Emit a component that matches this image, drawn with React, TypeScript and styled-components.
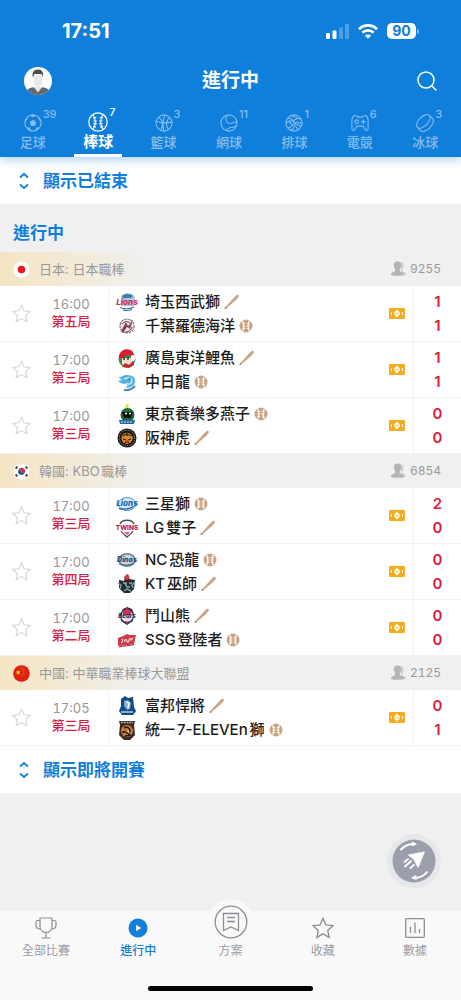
import React, { useState } from "react";
import styled, { createGlobalStyle } from "styled-components";

const blue = "#107fdb";
const red = "#d9213b";
const tan = "#c9a583";
const sans = `Inter, "Noto Sans CJK TC", "Liberation Sans", sans-serif`;

const GlobalStyle = createGlobalStyle`
  * { box-sizing: border-box; }
  body { margin: 0; background: #f0f0f0; font-family: ${sans}; text-autospace: normal; }
  button { font: inherit; color: inherit; background: none; border: 0; padding: 0; margin: 0; cursor: pointer; }
  svg { display: block; flex: none; overflow: visible; }
  h1, h2, h3, ul { margin: 0; padding: 0; font: inherit; }
  ul { list-style: none; }
`;

const Page = styled.div`
  display: flex;
  flex-direction: column;
  min-height: 100vh;
  background: #f0f0f0;
`;

const Header = styled.header`
  position: relative;
  z-index: 1;
  background: ${blue};
  color: #fff;
  box-shadow: 0 2px 10px rgba(16, 127, 219, 0.4);
`;

const StatusBar = styled.div`
  display: flex;
  align-items: center;
  justify-content: space-between;
  height: 62px;
  padding: 0 42px 0 62px;
`;

const Clock = styled.time`
  font-size: 20px;
  line-height: 24px;
  font-weight: 700;
`;

const StatusIcons = styled.div`
  display: flex;
  align-items: center;
  gap: 9px;
`;

const Battery = styled.div`
  display: flex;
  align-items: center;
  gap: 1px;
`;

const BatteryLevel = styled.span`
  width: 29px;
  border-radius: 5px;
  background: #fff;
  color: ${blue};
  font-size: 14px;
  line-height: 16px;
  font-weight: 700;
  text-align: center;
`;

const BatteryCap = styled.span`
  width: 2px;
  height: 5px;
  border-radius: 0 2px 2px 0;
  background: #7fbaf0;
`;

const TitleBar = styled.div`
  display: grid;
  grid-template-columns: 1fr auto 1fr;
  align-items: center;
  height: 38px;
  padding: 0 24px;
`;

const Title = styled.h1`
  font-size: 19px;
  line-height: 28px;
  font-weight: 700;
`;

const IconButton = styled.button<{ $end?: boolean }>`
  display: flex;
  align-items: center;
  justify-content: center;
  justify-self: ${(p) => (p.$end ? "end" : "start")};
`;

const Tabs = styled.nav`
  display: flex;
  height: 57px;
  padding-right: 3px;
`;

const Tab = styled.button<{ $active: boolean }>`
  position: relative;
  flex: 1;
  display: flex;
  flex-direction: column;
  align-items: center;
  justify-content: flex-end;
  gap: 3px;
  padding-bottom: 8px;
  color: ${(p) => (p.$active ? "#fff" : "#85bdef")};
  font-size: ${(p) => (p.$active ? 15 : 13)}px;
  font-weight: ${(p) => (p.$active ? 700 : 500)};
  line-height: 14px;

  &::after {
    content: "";
    position: absolute;
    bottom: 0;
    width: 48px;
    height: 3px;
    background: ${(p) => (p.$active ? "#fff" : "transparent")};
  }
`;

const TabIcon = styled.span`
  position: relative;
  display: block;
`;

const TabCount = styled.sup`
  position: absolute;
  left: 100%;
  top: -7px;
  padding-left: 1px;
  font-size: 11px;
  line-height: 14px;
  font-weight: 500;
`;

const Toggle = styled.button`
  display: flex;
  align-items: center;
  gap: 15px;
  width: 100%;
  height: 47px;
  padding: 0 20px;
  background: #fff;
  color: ${blue};
  font-size: 17px;
  line-height: 24px;
  font-weight: 700;
`;

const SectionTitle = styled.h2`
  padding: 16px 13px 6px;
  color: ${blue};
  font-size: 17px;
  line-height: 26px;
  font-weight: 700;
`;

const LeagueHeader = styled.div`
  display: flex;
  align-items: center;
  height: 34px;
  padding: 0 20px 0 13px;
  background: linear-gradient(90deg, #f5e5c3 0, #f0f0f0 150px);
  color: #999;
  font-size: 13px;
  line-height: 18px;
`;

const LeagueName = styled.h3`
  flex: 1;
  padding-left: 9px;
`;

const Viewers = styled.span`
  display: flex;
  align-items: center;
  gap: 4px;
  font-size: 12px;
  font-variant-numeric: tabular-nums;
`;

const MatchRow = styled.li`
  display: grid;
  grid-template-columns: 42px 67px 1fr 32px 48px;
  height: 56px;
  background: #fff;
  border-bottom: 1px solid #f2f2f2;
`;

const Center = styled.div`
  display: flex;
  align-items: center;
  justify-content: center;
`;

const StarButton = styled.button`
  display: flex;
  align-items: center;
  justify-content: center;
  color: #d6d6d6;
`;

const Schedule = styled.div`
  padding: 10px 9px 0 1px;
  border-right: 1px solid #f3f3f3;
  font-size: 13px;
  line-height: 17px;
  text-align: center;
`;

const Kickoff = styled.time`
  display: block;
  color: #979797;
  font-variant-numeric: tabular-nums;
`;

const Inning = styled.span`
  display: block;
  color: ${red};
  font-weight: 500;
`;

const Teams = styled.div`
  padding: 4px 0 0 8px;
`;

const Team = styled.div`
  display: flex;
  align-items: center;
  height: 24px;
  color: #1c1c1c;
  font-size: 15px;
  line-height: 24px;
  font-weight: 500;
`;

const TeamName = styled.span`
  padding: 0 4px 0 8px;
  white-space: nowrap;
`;

const Scores = styled.div`
  padding-top: 4px;
  border-left: 1px solid #f3f3f3;
  color: ${red};
  font-size: 15px;
  line-height: 24px;
  font-weight: 600;
  text-align: center;
`;

const Score = styled.div``;

const Footer = styled.footer`
  position: sticky;
  bottom: 0;
  margin-top: auto;
  height: 89px;
  background: #f9f9f9;
`;

const BottomNav = styled.nav`
  display: flex;
`;

const NavItem = styled.button<{ $active?: boolean }>`
  position: relative;
  flex: 1;
  display: flex;
  flex-direction: column;
  align-items: center;
  justify-content: flex-end;
  gap: 4px;
  height: 48px;
  color: ${(p) => (p.$active ? blue : "#9a9ba3")};
  font-size: 12px;
  line-height: 16px;
  font-weight: ${(p) => (p.$active ? 500 : 400)};
`;

const RaisedIcon = styled.span`
  position: absolute;
  bottom: 14px;
  display: flex;
  align-items: center;
  justify-content: center;
  width: 46px;
  height: 46px;
  border-radius: 50%;
  background: #f9f9f9;
`;

const FloatingButton = styled.button`
  position: absolute;
  right: 20px;
  bottom: calc(100% + 23px);
  display: flex;
  align-items: center;
  justify-content: center;
  width: 54px;
  height: 54px;
  border-radius: 50%;
  background: #e6e7ea;
`;

const HomeIndicator = styled.div`
  width: 165px;
  height: 5px;
  margin: 27px auto 0;
  border-radius: 3px;
  background: #000;
`;

const Signal = () => (
  <svg width="23" height="15" viewBox="0 0 23 15" fill="#fff">
    <rect x="0" y="9" width="4" height="6" rx="1" />
    <rect x="6.500" y="6.500" width="4" height="8.500" rx="1" />
    <rect x="13" y="3.500" width="4" height="11.500" rx="1" opacity=".25" />
    <rect x="19" y="0" width="4" height="15" rx="1" opacity=".25" />
  </svg>
);

const Wifi = () => (
  <svg width="20" height="15" viewBox="0 0 20 15" fill="none" stroke="#fff" strokeWidth="2.700">
    <path d="M1 5.200C6 .2 14 .2 19 5.200" />
    <path d="M4.400 8.700c3.200-3 8-3 11.200 0" />
    <path d="M10 14.800 6.900 11.600c1.800-1.500 4.400-1.500 6.200 0z" fill="#fff" stroke="none" />
  </svg>
);

const Avatar = () => (
  <svg width="28" height="28" viewBox="0 0 29 29">
    <defs>
      <clipPath id="avatar">
        <circle cx="14.500" cy="14.500" r="14.500" />
      </clipPath>
    </defs>
    <g clipPath="url(#avatar)">
      <rect width="29" height="29" fill="#fff" />
      <path d="M2 29c0-6 3-7 8-8l4.500 2 4.500-2c5 1 8 2 8 8z" fill="#66696e" />
      <path d="m10 20.500 4.500 6 4.500-6z" fill="#e5e7e9" />
      <path d="M9.800 8h9.400v6c0 4-2 6.500-4.700 6.500S9.800 18 9.800 14z" fill="#ebe9e8" />
      <path d="M9.300 11C8 6 9.500 3 14 2.500c4-.3 6.500 2 5.700 8.500l-1.200-3.500c-3 0-5-.2-8-.1z" fill="#4e4e50" />
    </g>
  </svg>
);

const SearchIcon = () => (
  <svg width="20" height="20" viewBox="0 0 20 20" fill="none" stroke="#fff" strokeWidth="1.500" strokeLinecap="round">
    <circle cx="9" cy="9" r="8" />
    <path d="m15 15 4 4" />
  </svg>
);

const sportArt: Record<string, React.ReactNode> = {
  soccer: (
    <>
      <circle cx="10" cy="10" r="9" />
      <g fill="currentColor" stroke="none">
        <path d="m10 6.300 3.600 2.700-1.400 4.200H7.800L6.400 9z" />
        <path d="M6.500 2 10 3.500 13.500 2 10 1zM1.300 8.500 3.700 6 4 2.800C2 4.500 1.300 6 1.300 8.500zM18.700 8.500 16.300 6 16 2.800c2 1.700 2.700 3.200 2.700 5.700zM2.800 14.700l3.600.2 1.400 3.500c-2.500-.6-4-1.800-5-3.700zM17.200 14.700l-3.600.2-1.400 3.500c2.500-.6 4-1.800 5-3.700z" />
      </g>
    </>
  ),
  baseball: (
    <>
      <circle cx="10" cy="10" r="9.200" />
      <path d="M5 2.500c3 4.500 3 10.500 0 15M15 2.500c-3 4.500-3 10.500 0 15" />
      <path d="m5 6.200 3.200-1M5.500 9h3.300M5.500 11.500l3.300.3M5 14l3 1.200M15 6.200l-3.200-1M14.500 9h-3.300M14.500 11.500l-3.300.3M15 14l-3 1.200" />
    </>
  ),
  basketball: (
    <>
      <circle cx="10" cy="10" r="9" />
      <path d="M1.500 8c5 2 11 2.500 17.300 1M11 1c-2 5-2.500 12-1 18M4.200 3.500c4.300 3.500 5.300 9 2.300 14.500M16.500 4c-4.500 3-5 9-1.500 13.500" />
    </>
  ),
  tennis: (
    <>
      <circle cx="10" cy="10" r="9" />
      <path d="M8 1.200C5 6 7 11 11.500 10.500c3-.5 5-2 7.400-1.500M7 18.500c1-3 4-3.500 6.500-3.500 2 0 3.500-1 4.500-2" />
    </>
  ),
  volleyball: (
    <>
      <circle cx="10" cy="10" r="9" />
      <path d="M10 10C9 6 6 4 2.500 5M9.500 8C11 5 15 4 18 6M10 10c4-1.500 7-.5 9 1.500M10 10c1 4-1 7-4 8M6.500 2C10 2.500 13 4 14 5.300M11 11c3 0 6 2 6.500 3.500M1 10c3-2 5-2 7.500-2.500M8.500 12C6 11 5 9 4.500 7M3 15.500c3-.5 5-2 5.500-4M11 13c2 1 3 3 2.500 5" />
    </>
  ),
  gamepad: (
    <>
      <path d="M3.500 2C5 1.300 6.500 2 7.500 3.500h5C13.500 2 15 1.300 16.500 2 18.500 3 19 4 19 7v9c0 2.500-2.500 2.700-3.500.7L13.500 13.500h-7l-2 3.200C3.500 18.700 1 18.500 1 16V7c0-3 .5-4 2.500-5z" />
      <circle cx="6.300" cy="8.500" r="2" />
      <path d="M13.700 6v5M11.200 8.500h5" />
    </>
  ),
  puck: (
    <g transform="rotate(-45 10 10)">
      <ellipse cx="10" cy="7.500" rx="9.500" ry="5" />
      <path d="M.5 7.500v5c0 2.600 4 5 9.500 5s9.500-2.400 9.500-5v-5" />
    </g>
  ),
};

const sports = [
  { key: "soccer", label: "足球", count: 39 },
  { key: "baseball", label: "棒球", count: 7 },
  { key: "basketball", label: "籃球", count: 3 },
  { key: "tennis", label: "網球", count: 11 },
  { key: "volleyball", label: "排球", count: 1 },
  { key: "gamepad", label: "電競", count: 6 },
  { key: "puck", label: "冰球", count: 3 },
];

const ExpandIcon = () => (
  <svg width="8" height="16" viewBox="0 0 8 16" fill="none" stroke={blue} strokeWidth="1.800">
    <path d="m0 4.500 4-3.500 4 3.500M0 11.500 4 15l4-3.500" />
  </svg>
);

const flagArt: Record<string, React.ReactNode> = {
  jp: (
    <>
      <circle cx="9" cy="9" r="8.500" fill="#fff" />
      <circle cx="9" cy="9" r="4" fill="#ee1622" />
    </>
  ),
  kr: (
    <>
      <circle cx="9" cy="9" r="8.500" fill="#fff" />
      <path d="M5.500 8a3.700 3.700 0 0 1 7.200 1.800C11 11.500 9.700 10 9 9S6.500 7 5.500 8z" fill="#d5304a" />
      <path d="M5.500 8a3.700 3.700 0 0 0 7.200 1.800C11 11.500 9.700 10 9 9S6.500 7 5.500 8z" fill="#1c56a5" />
      <path d="m2.800 6 1.800-2.300M13.400 3.700 15.200 6M2.800 12l1.800 2.300M13.400 14.300l1.800-2.300" stroke="#444" strokeWidth="2" />
    </>
  ),
  cn: (
    <>
      <circle cx="9" cy="9" r="8.800" fill="#df2112" />
      <path d="m5.500 5 .8 1.900 2 .1-1.600 1.300.6 2-1.800-1.100-1.800 1.100.6-2L2.700 7l2-.1z" fill="#fcd20e" />
      <path d="M9 3.500h1.200v1H9zM11 5.500h1v1h-1zM11 8.500h1v1h-1zM9 10.500h1.200v1H9z" fill="#f8b414" />
    </>
  ),
};

const ViewersIcon = () => (
  <svg width="15" height="16" viewBox="0 0 15 16">
    <path d="M9 1.500c3-.5 4 1.500 3.600 4-.2 2-1.500 3-1.300 4 .3 1.500 3.700 1 3.700 4.500h-4z" fill="#cfcfcf" />
    <path d="M6.500.5c3 0 4 2 3.600 4.700-.3 2-1.600 2.900-1.400 4.200.3 1.600 4.300 1.300 4.300 4.600 0 1-13 1-13 0 0-3.300 4-3 4.300-4.600.2-1.300-1.100-2.200-1.400-4.200C2.500 2.500 3.500.5 6.500.5z" fill="#b5b5b5" />
  </svg>
);

const StarShape = ({ size, width }: { size: number; width: number }) => (
  <svg width={size} height={size} viewBox="0 0 20 20" fill="none" stroke="currentColor" strokeWidth={width}>
    <path d="m10 1.300 2.700 5.900 6.300.7-4.700 4.300 1.300 6.300-5.600-3.200-5.600 3.200 1.300-6.300L1 7.900l6.300-.7z" />
  </svg>
);

const Bat = () => (
  <svg width="16" height="16" viewBox="0 0 16 16">
    <path d="M1 13.600 9.600 4l3-2.900c1.300-1 3 .5 2 1.900l-2.800 3.200L2 14.500z" fill={tan} />
    <circle cx="1.500" cy="14" r="1.100" fill="#b08a68" />
  </svg>
);

const Ball = () => (
  <svg width="14" height="14" viewBox="0 0 14 14" fill="none">
    <circle cx="7" cy="7" r="6.500" fill={tan} />
    <path d="M3.600 1.500c1.600 3.500 1.600 7.500 0 11M10.400 1.500c-1.600 3.500-1.600 7.500 0 11" stroke="#fff" strokeWidth="1.100" />
    <path d="M3.200 4.500h3M3.500 7h3M3.200 9.500h3M10.800 4.500h-3M10.500 7h-3M10.800 9.500h-3" stroke="#fff" strokeWidth=".8" />
  </svg>
);

const PitchIcon = () => (
  <svg width="16" height="11" viewBox="0 0 16 11" fill="none" stroke="#fff">
    <rect width="16" height="11" rx="1" fill="#f3ad1c" stroke="none" />
    <circle cx="8" cy="5.500" r="2.200" strokeWidth="1.200" />
    <path d="M8 1.500v8" strokeWidth="1.200" />
    <path d="M2.500 4v3M13.500 4v3" strokeWidth="1" />
  </svg>
);

const mark = (text: string, fill: string, size = 7, y = 12) => (
  <text x="10" y={y} textAnchor="middle" fontSize={size} fontWeight="800" fontStyle="italic" fill={fill} fontFamily="Inter, sans-serif">
    {text}
  </text>
);

const logoArt: Record<string, React.ReactNode> = {
  seibu: (
    <>
      <path d="M4 5c1-4 11-5 14 0l-1 9H4z" fill="#a9c9de" />
      <path d="M5 4c3-3 8-3 11 0l-2 2H6z" fill="#3d7fae" />
      {mark("Lions", "#d42a5b", 8, 13)}
      <path d="M3 15.500c4 1.500 10 1.500 14-.5M6 18c3 .8 6 .6 9-.5" stroke="#3572a8" strokeWidth="1.100" fill="none" />
    </>
  ),
  lotte: (
    <>
      <circle cx="10" cy="10" r="7" fill="#f1e9eb" stroke="#8a7079" strokeWidth="1.200" strokeDasharray="2.500 .8" />
      <path d="m4 15 5-9 2 4 5-6-3 9-3-2-4 6z" fill="#8c4458" />
      <path d="M5 8c3-3 6-3 8-1M8 16c4 0 6-2 7-5" stroke="#444" strokeWidth="1" fill="none" />
    </>
  ),
  carp: (
    <>
      <circle cx="10" cy="11" r="8.500" fill="#2f8f50" />
      <path d="M5 10h10v6l-5 3-5-3z" fill="#f4dcc8" />
      <path d="M2 8C3 1 12-1 16 4l1 4-6-1-8 4z" fill="#d8202f" />
      <path d="M14 8c4-3 6 2 3 5l-3 1z" fill="#fff" />
      <path d="m5 19 3-4 4 2 4-4 1 4-5 3z" fill="#c72232" />
      <path d="M7 9v3M11 9v3" stroke="#222" strokeWidth="1.300" />
    </>
  ),
  dragons: (
    <>
      <path d="M1 5c4 1 4-2 9-2 6 0 9 3 8 7s-5 6-10 6c3-1 3-3 1-4-4 0-6-1-8-3l4-1z" fill="#55b3dd" />
      <path d="M7 7c4-2 8-1 8 2s-4 4-6 2" fill="none" stroke="#dff3fb" strokeWidth="1.200" />
      <path d="M7 18c5 1 8-1 11-4" stroke="#3b7fbe" strokeWidth="1.800" fill="none" />
      <circle cx="12.500" cy="7" r="1" fill="#1c5896" />
    </>
  ),
  swallows: (
    <>
      <path d="m8 5 1-5 3 1-1 4z" fill="#e3dc35" />
      <circle cx="10.500" cy="11" r="7" fill="#176b3c" />
      <path d="M5 8h11l-2 6H7z" fill="#111" />
      <path d="M8 9.500h2M12 9.500h2" stroke="#fff" strokeWidth="1.500" />
      <path d="M2 16h16l-1 4H3z" fill="#2966a6" />
      <path d="M4 18h12" stroke="#dcecf5" strokeWidth="1" strokeDasharray="2 1" />
    </>
  ),
  tigers: (
    <>
      <circle cx="10" cy="10" r="9.500" fill="#171717" />
      <circle cx="10" cy="10" r="7.800" fill="none" stroke="#b7a68b" strokeWidth=".9" strokeDasharray="1.200 1" />
      <circle cx="10" cy="10.300" r="5.600" fill="#dc8a2a" />
      <path d="M6 8c2-2 6-2 8 0M6 11l3 1M14 11l-3 1M8 15l2-2 2 2M10 5v3" stroke="#231912" strokeWidth="1.200" fill="none" />
      <path d="M8.500 13h3v2h-3z" fill="#c82b25" />
    </>
  ),
  samsung: (
    <>
      <ellipse cx="10" cy="10" rx="8.500" ry="6.500" fill="#d9eaf6" stroke="#4c95ce" strokeWidth="1" />
      {mark("Lions", "#1967ae", 8, 12)}
      <path d="M2 14.500c5 1 11 .5 15-2" stroke="#1967ae" strokeWidth="1.300" fill="none" />
    </>
  ),
  twins: (
    <>
      <path d="M3 6C5 1 15 1 17 6M4 13c2 3 4 4 6 6 2-2 4-3 6-6" stroke="#55494e" strokeWidth="1.300" fill="none" />
      <text x="10" y="12" textAnchor="middle" fontSize="6.500" fontWeight="800" fill="#c2184f" fontFamily="Inter, sans-serif">TWINS</text>
      <path d="M7 14h6l-3 3z" fill="#cf597f" />
    </>
  ),
  nc: (
    <>
      <ellipse cx="10" cy="10" rx="8" ry="6.300" fill="#c9d3dd" stroke="#647f9a" strokeWidth="1.600" />
      {mark("Dinos", "#264a73", 7, 12)}
      <path d="M2 14c5 1.500 11 1.500 15-1" stroke="#51718f" strokeWidth="1.200" fill="none" />
    </>
  ),
  kt: (
    <>
      <path d="m2 6 5 1 1-5 3-2 1 5 6 1-1 9-4 4H7l-5-5z" fill="#292b31" />
      <path d="m7 3 4-3 2 5-4 1z" fill="#d1363e" />
      <path d="m1 9 3 2-1 4M18 8l-3 3 1 3M7 17l3-2 4 2" stroke="#70aaa6" strokeWidth="1.400" fill="none" />
      <path d="M6 9h3v3M12 9h3M9 13h4" stroke="#d9dadd" strokeWidth="1.100" fill="none" />
    </>
  ),
  doosan: (
    <>
      <path d="m6 3 4-2 5 2 2 5-1 7-6 4-6-4-1-7z" fill="#202c59" />
      <circle cx="10" cy="10" r="6" fill="#dde1ec" />
      <path d="m5 6 5-4 5 4-2 3H7z" fill="#d0304f" />
      {mark("Bears", "#1c2a59", 6, 12)}
      <path d="M6 14c3 2 5 2 8 0l-4 4z" fill="#c82a49" />
    </>
  ),
  ssg: (
    <>
      <path d="m1 8 5-2 4-2 3 1h6l-2 9-6 1-10 1z" fill="#d43b4a" />
      <path d="M4 13c2-1 2-3 1-4M8 12c-1-3 2-3 2-1s2 1 2-1 2-2 2 0l2-2" stroke="#f9dfe1" strokeWidth="1.100" fill="none" />
      <path d="M2 17c5-1.500 10-1 15-2.500" stroke="#9f2030" strokeWidth="1" fill="none" />
    </>
  ),
  fubon: (
    <>
      <path d="m4 3 4-3 3 2 5-1 1 10 2 4-3 4H5l-3-4 2-5z" fill="#174985" />
      <path d="m7 5 4-1 3 3-1 6-3 1-3-4z" fill="#7dabd0" />
      <path d="m9 6 3 1-1 5" stroke="#fff" strokeWidth="1.500" fill="none" />
      <path d="M4 16h12" stroke="#c2d9eb" strokeWidth="1.400" />
    </>
  ),
  uni: (
    <>
      <path d="M2 1h16l-1 4 1 10-5 5H7l-5-5 1-10z" fill="#3a2d29" />
      <path d="M4 2.500h12" stroke="#b8aa9b" strokeWidth="1.300" strokeDasharray="2 .8" />
      <circle cx="10" cy="11" r="6" fill="#c77b36" />
      <path d="M7 8c3-2 6 0 6 3l-4 1 4 3-5 1M5 12h3" stroke="#2d1d17" strokeWidth="1.700" fill="none" />
      <path d="m9 11 3-1v3z" fill="#ead6b5" />
    </>
  ),
};

type Side = { name: string; logo: string; batting: boolean; score: number };
type Match = { time: string; inning: string; sides: [Side, Side] };
type League = { flag: string; name: string; viewers: number; matches: Match[] };

const side = (name: string, logo: string, batting: boolean, score: number): Side => ({ name, logo, batting, score });

const leagues: League[] = [
  {
    flag: "jp",
    name: "日本: 日本職棒",
    viewers: 9255,
    matches: [
      { time: "16:00", inning: "第五局", sides: [side("埼玉西武獅", "seibu", true, 1), side("千葉羅德海洋", "lotte", false, 1)] },
      { time: "17:00", inning: "第三局", sides: [side("廣島東洋鯉魚", "carp", true, 1), side("中日龍", "dragons", false, 1)] },
      { time: "17:00", inning: "第三局", sides: [side("東京養樂多燕子", "swallows", false, 0), side("阪神虎", "tigers", true, 0)] },
    ],
  },
  {
    flag: "kr",
    name: "韓國: KBO職棒",
    viewers: 6854,
    matches: [
      { time: "17:00", inning: "第三局", sides: [side("三星獅", "samsung", false, 2), side("LG雙子", "twins", true, 0)] },
      { time: "17:00", inning: "第四局", sides: [side("NC恐龍", "nc", false, 0), side("KT巫師", "kt", true, 0)] },
      { time: "17:00", inning: "第二局", sides: [side("鬥山熊", "doosan", true, 0), side("SSG登陸者", "ssg", false, 0)] },
    ],
  },
  {
    flag: "cn",
    name: "中國: 中華職業棒球大聯盟",
    viewers: 2125,
    matches: [
      { time: "17:05", inning: "第三局", sides: [side("富邦悍將", "fubon", true, 0), side("統一7-ELEVEn獅", "uni", false, 1)] },
    ],
  },
];

const TrophyIcon = () => (
  <svg width="22" height="22" viewBox="0 0 22 22" fill="none" stroke="#8c8d92" strokeWidth="1.200">
    <path d="M5 1h12v8c0 4-2.500 6.500-6 6.500S5 13 5 9zM11 15.500V21M6.500 21h9" />
    <path d="M5 3.500H2.500C1.500 3.500 1 4 1 5v3c0 2.500 1.500 4 4.500 4M17 3.500h2.500c1 0 1.500.5 1.500 1.500v3c0 2.500-1.500 4-4.500 4" />
  </svg>
);

const PlayIcon = () => (
  <svg width="20" height="22" viewBox="0 0 20 22">
    <circle cx="10" cy="11" r="9.500" fill={blue} />
    <path d="m8.500 8.500 4 2.500-4 2.500z" fill="#fff" stroke="#fff" strokeLinejoin="round" />
  </svg>
);

const PlanIcon = () => (
  <svg width="34" height="34" viewBox="0 0 34 34" fill="none" stroke="#8c8d92" strokeWidth="1.300">
    <circle cx="17" cy="17" r="15.800" />
    <path d="M9.500 8.500h15v17L17 22l-7.500 3.500zM13 12.500h8M13 16.500h8" />
  </svg>
);

const StatsIcon = () => (
  <svg width="20" height="22" viewBox="0 0 20 22" fill="none" stroke="#8c8d92" strokeWidth="1.300">
    <rect x=".7" y="1.700" width="18.600" height="18.600" rx="1" />
    <path d="M5.500 10v6M10 5.500V16M14.500 12v4" />
  </svg>
);

const RefreshPlaneIcon = () => (
  <svg width="44" height="44" viewBox="0 0 44 44" fill="none" stroke="#fff" strokeLinecap="round" strokeLinejoin="round">
    <circle cx="22" cy="22" r="21.500" fill="#9b9fab" stroke="none" />
    <path d="m32 13-15.500 3 5.500 4.500L26 28z" fill="#fff" strokeWidth="1" />
    <path d="M9 10.500C12 7 17 5 22.500 5M35 33c-3 4-8 6-13.500 6" strokeWidth="2" />
    <path d="m20.500 3 4 2.300-4.500 1.500zM23.500 36.500l-4 2.300 4.500 1.700z" fill="#fff" strokeWidth=".6" />
    <path d="m12.500 23 3.500-3M13 27.500l6-5.500M18.500 29l3.500-3.200" strokeWidth="1.800" />
  </svg>
);

const FavoriteIcon = styled.span`
  color: #8c8d92;
`;

function MatchItem({ match }: { match: Match }) {
  return (
    <MatchRow>
      <StarButton aria-label="收藏">
        <StarShape size={19} width={1.2} />
      </StarButton>
      <Schedule>
        <Kickoff>{match.time}</Kickoff>
        <Inning>{match.inning}</Inning>
      </Schedule>
      <Teams>
        {match.sides.map((s) => (
          <Team key={s.logo}>
            <svg width="20" height="20" viewBox="0 0 20 20">{logoArt[s.logo]}</svg>
            <TeamName>{s.name}</TeamName>
            {s.batting ? <Bat /> : <Ball />}
          </Team>
        ))}
      </Teams>
      <Center>
        <PitchIcon />
      </Center>
      <Scores>
        {match.sides.map((s) => (
          <Score key={s.logo}>{s.score}</Score>
        ))}
      </Scores>
    </MatchRow>
  );
}

export default function App() {
  const [sport, setSport] = useState("baseball");
  return (
    <Page>
      <GlobalStyle />
      <Header>
        <StatusBar>
          <Clock>17:51</Clock>
          <StatusIcons>
            <Signal />
            <Wifi />
            <Battery>
              <BatteryLevel>90</BatteryLevel>
              <BatteryCap />
            </Battery>
          </StatusIcons>
        </StatusBar>
        <TitleBar>
          <IconButton aria-label="個人">
            <Avatar />
          </IconButton>
          <Title>進行中</Title>
          <IconButton $end aria-label="搜尋">
            <SearchIcon />
          </IconButton>
        </TitleBar>
        <Tabs>
          {sports.map((s) => {
            const active = s.key === sport;
            const size = active ? 20 : 18;
            return (
              <Tab key={s.key} $active={active} onClick={() => setSport(s.key)}>
                <TabIcon>
                  <svg width={size} height={size} viewBox="0 0 20 20" fill="none" stroke="currentColor" strokeWidth="1.200">
                    {sportArt[s.key]}
                  </svg>
                  <TabCount>{s.count}</TabCount>
                </TabIcon>
                <span>{s.label}</span>
              </Tab>
            );
          })}
        </Tabs>
      </Header>
      <main>
        <Toggle>
          <ExpandIcon />
          顯示已結束
        </Toggle>
        <SectionTitle>進行中</SectionTitle>
        {leagues.map((league) => (
          <section key={league.flag}>
            <LeagueHeader>
              <svg width="17" height="17" viewBox="0 0 18 18">{flagArt[league.flag]}</svg>
              <LeagueName>{league.name}</LeagueName>
              <Viewers>
                <ViewersIcon />
                {league.viewers}
              </Viewers>
            </LeagueHeader>
            <ul>
              {league.matches.map((m) => (
                <MatchItem key={m.sides[0].logo} match={m} />
              ))}
            </ul>
          </section>
        ))}
        <Toggle>
          <ExpandIcon />
          顯示即將開賽
        </Toggle>
      </main>
      <Footer>
        <FloatingButton aria-label="重新整理">
          <RefreshPlaneIcon />
        </FloatingButton>
        <BottomNav>
          <NavItem>
            <TrophyIcon />
            全部比賽
          </NavItem>
          <NavItem $active>
            <PlayIcon />
            進行中
          </NavItem>
          <NavItem>
            <RaisedIcon>
              <PlanIcon />
            </RaisedIcon>
            方案
          </NavItem>
          <NavItem>
            <FavoriteIcon>
              <StarShape size={22} width={1.2} />
            </FavoriteIcon>
            收藏
          </NavItem>
          <NavItem>
            <StatsIcon />
            數據
          </NavItem>
        </BottomNav>
        <HomeIndicator />
      </Footer>
    </Page>
  );
}
